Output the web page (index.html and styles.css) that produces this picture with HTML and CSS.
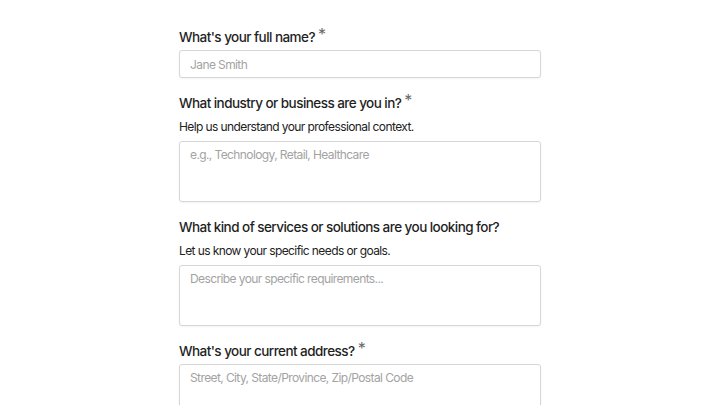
FILE: index.html
```html
<!DOCTYPE html>
<html lang="en">
<head>
    <meta charset="UTF-8">
    <meta name="viewport" content="width=device-width, initial-scale=1.0">
    <title>Tell us about yourself</title>
    <link rel="stylesheet" href="styles.css">
</head>
<body>
    <div class="form-container">
        <div class="form-group">
            <label for="fullName">What's your full name? <span class="required">*</span></label>
            <input type="text" id="fullName" placeholder="Jane Smith">
        </div>

        <div class="form-group">
            <label for="industry">What industry or business are you in? <span class="required">*</span></label>
            <div class="help">Help us understand your professional context.</div>
            <textarea id="industry" placeholder="e.g., Technology, Retail, Healthcare"></textarea>
        </div>

        <div class="form-group">
            <label for="services">What kind of services or solutions are you looking for?</label>
            <div class="help">Let us know your specific needs or goals.</div>
            <textarea id="services" placeholder="Describe your specific requirements..."></textarea>
        </div>

        <div class="form-group">
            <label for="address">What's your current address? <span class="required">*</span></label>
            <textarea id="address" placeholder="Street, City, State/Province, Zip/Postal Code"></textarea>
        </div>
    </div>
</body>
</html>
```
FILE: styles.css
```css
body {
    font-family: 'Inter', 'Liberation Sans', sans-serif;
    margin: 0;
    padding: 27px 0 0;
    background: #fff;
    color: #1f1f1f;
}
.form-container {
    width: 362px;
    margin: 0 auto;
}
.form-group {
    margin-bottom: 15px;
}
label {
    display: block;
    height: 20px;
    font-size: 13.5px;
    line-height: 20px;
    font-weight: 500;
    letter-spacing: -0.55px;
    color: #1f1f1f;
    margin-bottom: 3px;
}
.required {
    color: #6b6b6b;
    font-size: 16px;
    line-height: 0;
    font-weight: 400;
    vertical-align: 2px;
}
.help {
    font-size: 12px;
    line-height: 20px;
    letter-spacing: -0.6px;
    color: #222;
    margin-top: 4px;
    margin-bottom: 4px;
}
input, textarea {
    display: block;
    box-sizing: border-box;
    width: 100%;
    margin: 0;
    padding: 6px 10px;
    border: 1px solid #d6d6d6;
    border-radius: 3px;
    box-shadow: 0 1px 2px rgba(0,0,0,0.05);
    font-family: 'Inter', 'Liberation Sans', sans-serif;
    font-size: 12px;
    line-height: 14px;
    letter-spacing: -0.6px;
    color: #1f1f1f;
    background: #fff;
    resize: none;
}
input {
    height: 28px;
}
textarea {
    height: 61px;
}
::placeholder {
    color: #a3a3a3;
}
```
